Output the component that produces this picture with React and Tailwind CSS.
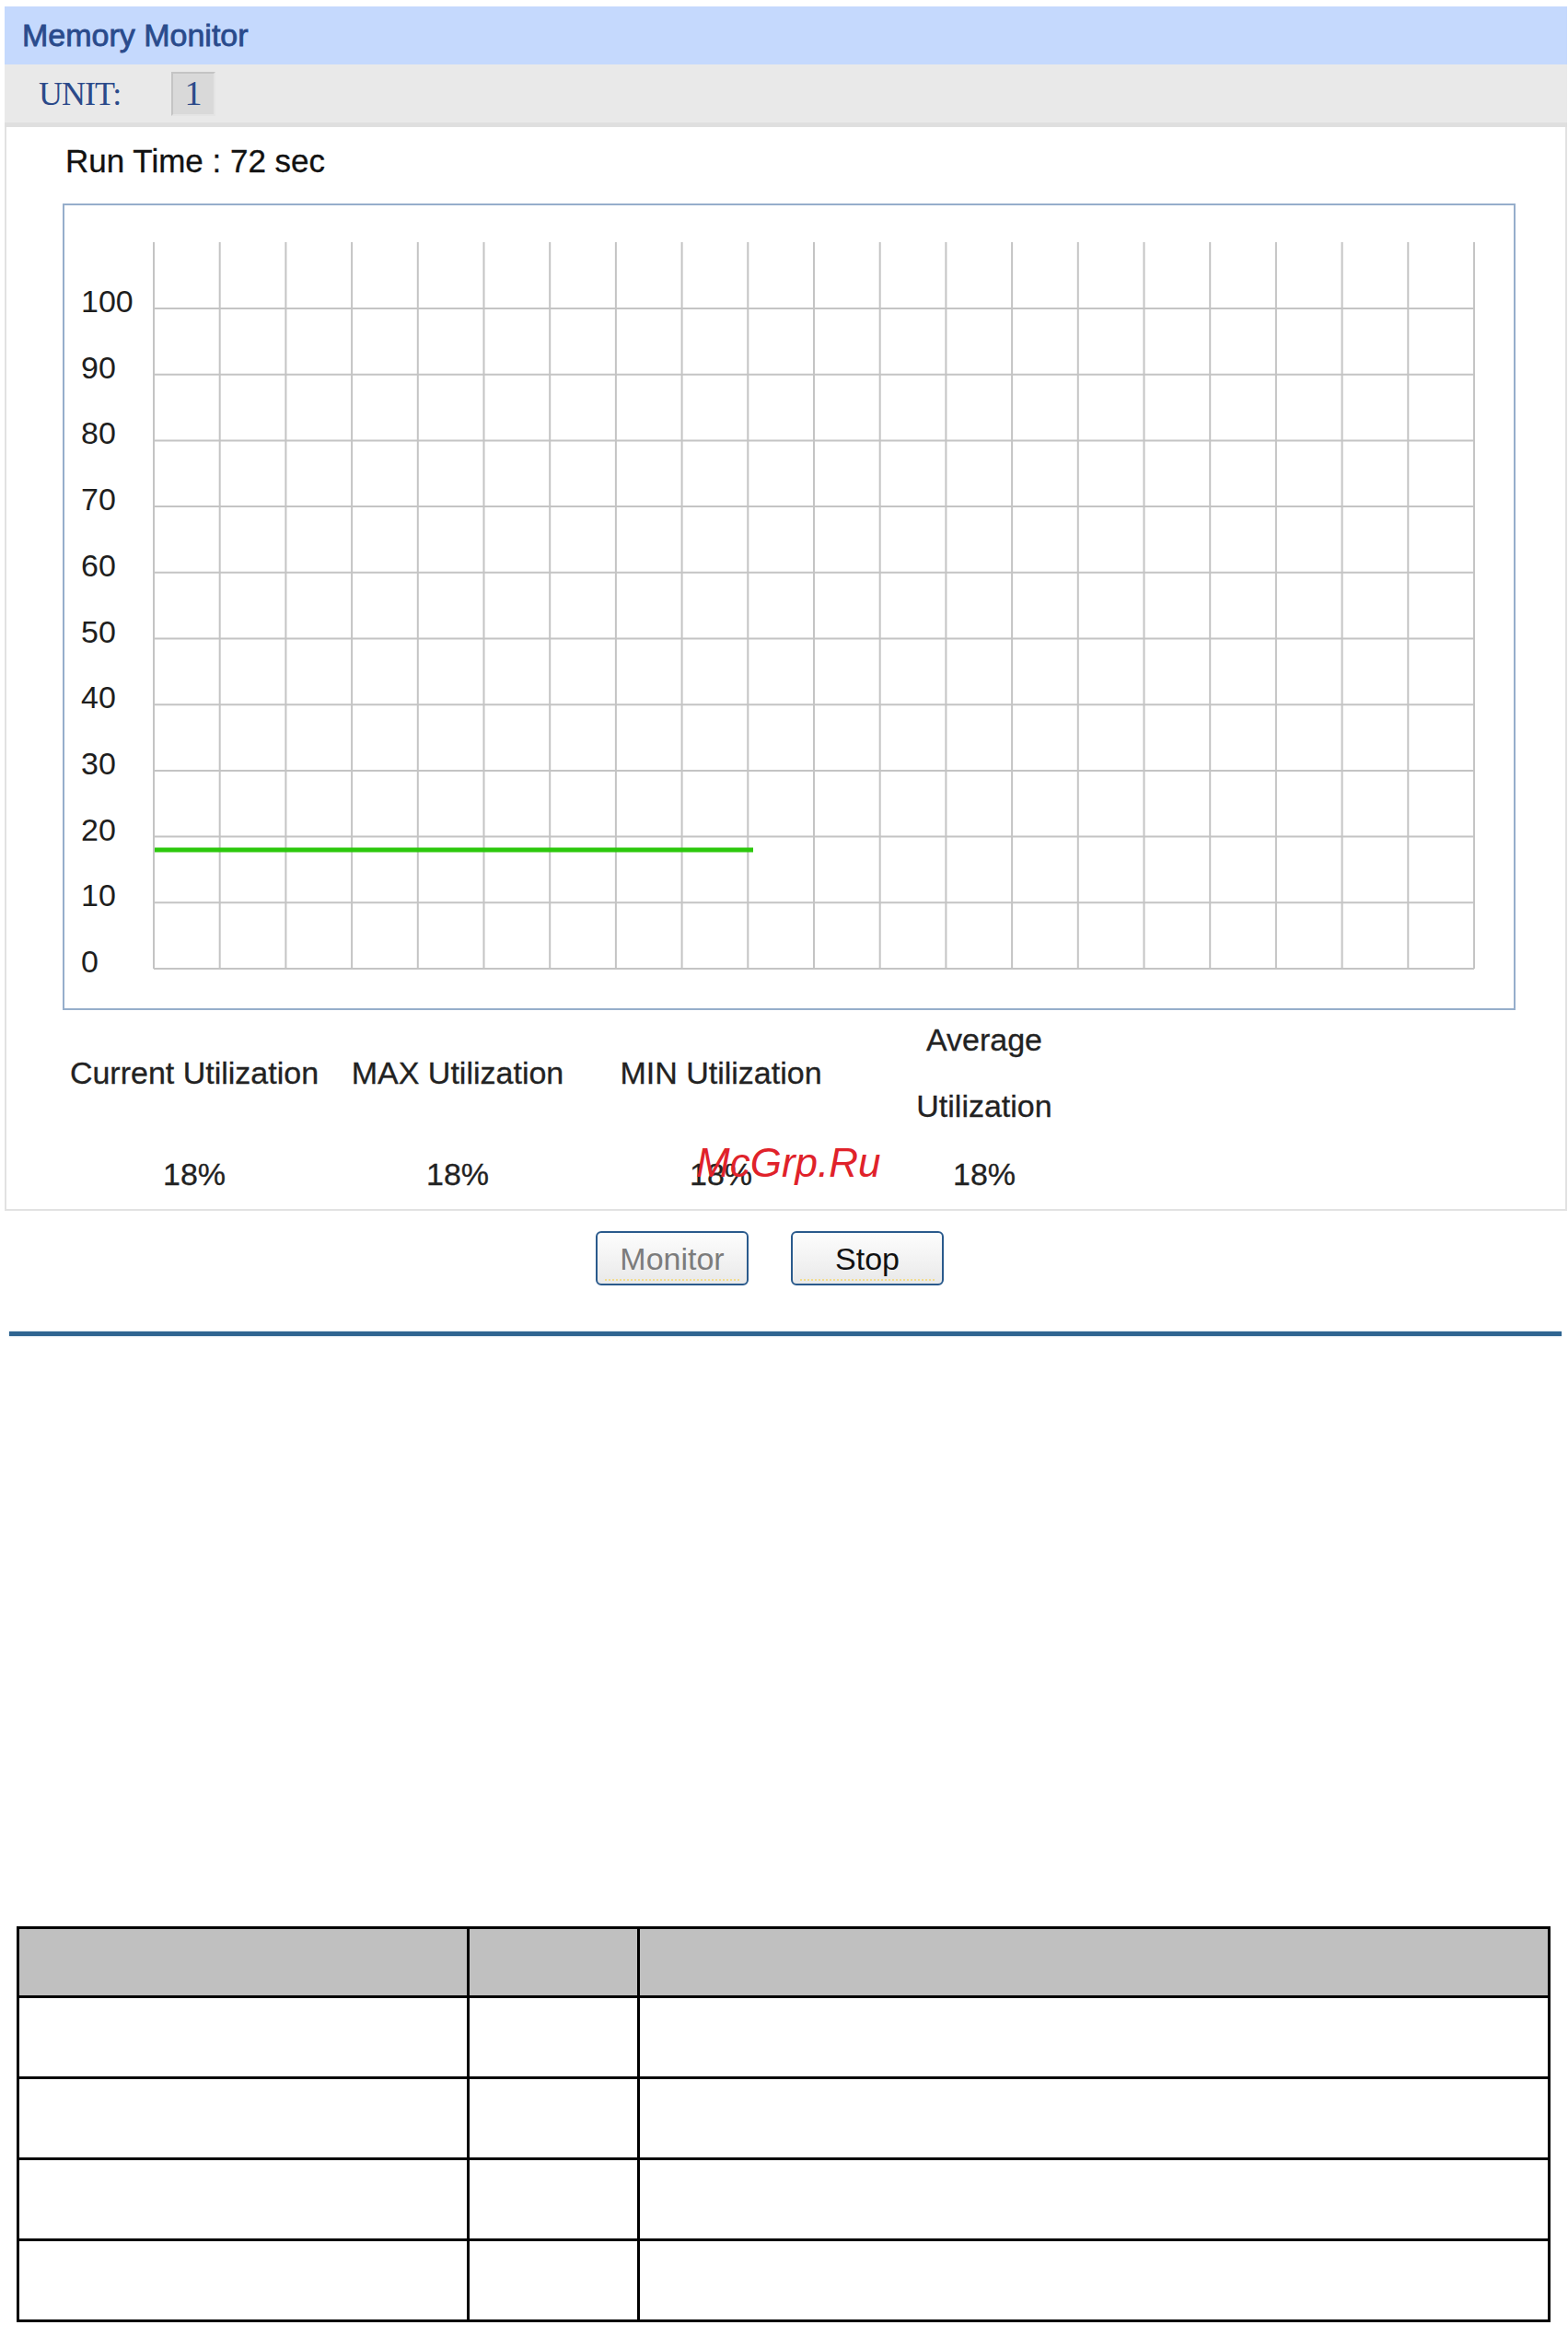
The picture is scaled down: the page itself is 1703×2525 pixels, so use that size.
const yLabels = [100, 90, 80, 70, 60, 50, 40, 30, 20, 10, 0];

const Chart = () => {
  const x0 = 97;
  const x1 = 1531;
  const colW = (x1 - x0) / 20;
  const yTop = 40;
  const y0 = 829;
  const rowH = (y0 - 112) / 10;

  return (
    <svg width="1574" height="872" className="block">
      {Array.from({ length: 21 }).map((_, i) => (
        <line
          key={"v" + i}
          x1={x0 + i * colW}
          x2={x0 + i * colW}
          y1={yTop}
          y2={y0}
          stroke="#c4c4c4"
          strokeWidth="2"
        />
      ))}
      {yLabels.map((v, i) => {
        const y = 112 + i * rowH;
        return (
          <g key={v}>
            <line x1={x0} x2={x1} y1={y} y2={y} stroke="#c4c4c4" strokeWidth="2" />
            <text
              x="18"
              y={y + 4}
              fontSize="34"
              fill="#1e1e1e"
              fontFamily="'Liberation Sans', Arial, sans-serif"
            >
              {v}
            </text>
          </g>
        );
      })}
      <line x1={x0 + 1} x2="748" y1={y0 - 129} y2={y0 - 129} stroke="#2cc80c" strokeWidth="5" />
    </svg>
  );
};

const Stat = ({ children }) => (
  <div className="flex items-center justify-center text-center leading-[72px]">{children}</div>
);

const Button = ({ label, disabled }) => (
  <button
    className={
      "relative w-[166px] h-[59px] rounded-[6px] border-2 border-[#2a5a8c] bg-gradient-to-b from-[#fdfdfd] to-[#e9e9e9] text-[34px] leading-none " +
      (disabled ? "text-[#7c7c7c]" : "text-[#111]")
    }
  >
    {label}
    <span className="absolute left-[8px] right-[8px] bottom-[3px] border-b-2 border-dotted border-[#f3dc8c]" />
  </button>
);

export default function App() {
  return (
    <div className="relative w-[1703px] h-[2525px] overflow-hidden bg-white font-['Liberation_Sans',Arial,sans-serif] text-[#1a1a1a]">
      <div className="ml-[5px] pt-[7px] w-[1697px]">
        <div className="h-[63px] bg-[#c5d9fd] flex items-center pl-[19px]">
          <span className="text-[34px] text-[#2a4b8c] [-webkit-text-stroke:0.8px_#2a4b8c]">
            Memory Monitor
          </span>
        </div>
        <div className="h-[68px] bg-[#e9e9e9] border-b-[5px] border-[#dfdfdf] flex items-center pl-[37px]">
          <span className="font-['Liberation_Serif','Times_New_Roman',serif] text-[36px] text-[#2b4a8a] w-[144px] tracking-[-1px]">
            UNIT:
          </span>
          <span className="w-[48px] h-[48px] flex items-center justify-center bg-[#d9d9d9] border-2 border-t-[#c4c4c4] border-l-[#c4c4c4] border-r-[#e4e4e4] border-b-[#e4e4e4] font-['Liberation_Serif','Times_New_Roman',serif] text-[38px] text-[#2b4a8a]">
            1
          </span>
        </div>
        <div className="border-x-2 border-b-2 border-[#e2e2e2] pl-[61px] pt-[17px]">
          <div className="text-[35px] leading-[40px] pl-[3px] text-[#111] [-webkit-text-stroke:0.3px_#111]">
            Run Time : 72 sec
          </div>
          <div className="mt-[26px] w-[1578px] h-[876px] border-2 border-[#96aecb]">
            <Chart />
          </div>
          <div className="-mt-[4px] grid grid-cols-[286px_286px_286px_286px] grid-rows-[144px_76px] text-[34px] text-[#222] [-webkit-text-stroke:0.3px_#222]">
            <Stat>Current Utilization</Stat>
            <Stat>MAX Utilization</Stat>
            <Stat>MIN Utilization</Stat>
            <Stat>
              <span>
                Average
                <br />
                Utilization
              </span>
            </Stat>
            <Stat>18%</Stat>
            <Stat>18%</Stat>
            <Stat>18%</Stat>
            <Stat>18%</Stat>
          </div>
        </div>
        <div className="flex justify-center gap-[46px] pr-[35px] mt-[22px]">
          <Button label="Monitor" disabled />
          <Button label="Stop" />
        </div>
        <div className="ml-[5px] mt-[50px] w-[1686px] h-[5px] bg-[#2f6591] shadow-[0_0_2px_#9bbbd6]" />
        <div className="ml-[13px] mt-[641px] w-[1666px] border-[3px] border-black">
          <div className="flex h-[72px] bg-[#c0c0c0]">
            <div className="w-[486px]" />
            <div className="w-[182px] border-l-[3px] border-black box-content" />
            <div className="w-[986px] border-l-[3px] border-black box-content" />
          </div>
          {[0, 1, 2, 3].map((r) => (
            <div key={r} className="flex h-[88px] border-t-[3px] border-black">
              <div className="w-[486px]" />
              <div className="w-[182px] border-l-[3px] border-black box-content" />
              <div className="w-[986px] border-l-[3px] border-black box-content" />
            </div>
          ))}
        </div>
      </div>
      <div className="absolute left-[756px] top-[1241px] italic text-[44px] leading-none text-[#e0222a]">
        McGrp.Ru
      </div>
    </div>
  );
}
